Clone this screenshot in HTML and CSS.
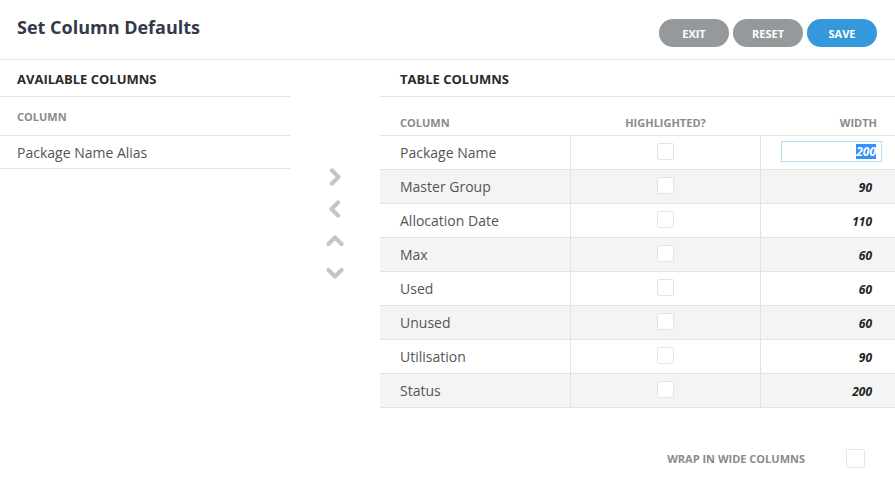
FILE: index.html
```html
<!DOCTYPE html>
<html lang="en">
<head>
  <meta charset="UTF-8">
  <title>Set Column Defaults</title>
  <link rel="stylesheet" href="styles.css">
</head>
<body>
  <div class="header">
    <h1>Set Column Defaults</h1>
    <div class="actions">
      <button class="btn grey">EXIT</button>
      <button class="btn grey">RESET</button>
      <button class="btn blue">SAVE</button>
    </div>
  </div>

  <div class="content">
    <div class="available">
      <div class="section-title">AVAILABLE COLUMNS</div>
      <div class="avail-head">COLUMN</div>
      <div class="avail-row">Package Name Alias</div>
    </div>

    <div class="moves">
      <svg width="18" height="18" viewBox="0 0 18 18"><polyline points="6,2.5 12.5,9 6,15.5" /></svg>
      <svg width="18" height="18" viewBox="0 0 18 18"><polyline points="12,2.5 5.5,9 12,15.5" /></svg>
      <svg width="18" height="18" viewBox="0 0 18 18"><polyline points="2.5,12 9,5.5 15.5,12" /></svg>
      <svg width="18" height="18" viewBox="0 0 18 18"><polyline points="2.5,6 9,12.5 15.5,6" /></svg>
    </div>

    <div class="table-cols">
      <div class="section-title indent">TABLE COLUMNS</div>
      <div class="grid head">
        <div class="c1">COLUMN</div>
        <div class="c2">HIGHLIGHTED?</div>
        <div class="c3">WIDTH</div>
      </div>
      <div class="grid row">
        <div class="c1">Package Name</div>
        <div class="c2"><span class="check"></span></div>
        <div class="c3"><span class="width-input"><span class="sel">200</span></span></div>
      </div>
      <div class="grid row alt">
        <div class="c1">Master Group</div>
        <div class="c2"><span class="check"></span></div>
        <div class="c3 num">90</div>
      </div>
      <div class="grid row">
        <div class="c1">Allocation Date</div>
        <div class="c2"><span class="check"></span></div>
        <div class="c3 num">110</div>
      </div>
      <div class="grid row alt">
        <div class="c1">Max</div>
        <div class="c2"><span class="check"></span></div>
        <div class="c3 num">60</div>
      </div>
      <div class="grid row">
        <div class="c1">Used</div>
        <div class="c2"><span class="check"></span></div>
        <div class="c3 num">60</div>
      </div>
      <div class="grid row alt">
        <div class="c1">Unused</div>
        <div class="c2"><span class="check"></span></div>
        <div class="c3 num">60</div>
      </div>
      <div class="grid row">
        <div class="c1">Utilisation</div>
        <div class="c2"><span class="check"></span></div>
        <div class="c3 num">90</div>
      </div>
      <div class="grid row alt">
        <div class="c1">Status</div>
        <div class="c2"><span class="check"></span></div>
        <div class="c3 num">200</div>
      </div>

      <div class="wrap-opt">
        <span>WRAP IN WIDE COLUMNS</span>
        <span class="check"></span>
      </div>
    </div>
  </div>
</body>
</html>
```

FILE: styles.css
```css
body {
  margin: 0;
  font-family: "Open Sans", "Noto Sans", sans-serif;
  color: #333;
  background: #fff;
}

.header {
  display: flex;
  justify-content: space-between;
  align-items: flex-start;
  height: 59px;
  padding: 0 18px 0 17px;
  border-bottom: 1px solid #e2e2ea;
}

h1 {
  margin: 0;
  padding-top: 15px;
  font-size: 18px;
  font-weight: 700;
  color: #323a4c;
}

.actions {
  display: flex;
  gap: 4px;
  padding-top: 19px;
}

.btn {
  width: 70px;
  height: 28px;
  border: none;
  border-radius: 14px;
  color: #fff;
  font-family: inherit;
  font-size: 11px;
  font-weight: 700;
  padding: 0;
}

.btn.grey {
  background: #96999c;
}

.btn.blue {
  background: #3498db;
}

.content {
  display: flex;
}

.available {
  width: 290px;
}

.section-title {
  height: 36px;
  line-height: 38px;
  padding-left: 17px;
  font-size: 13px;
  font-weight: 700;
  color: #2a2a2a;
  border-bottom: 1px solid #e2e2e2;
}

.section-title.indent {
  padding-left: 20px;
}

.avail-head {
  height: 38px;
  line-height: 40px;
  padding-left: 17px;
  font-size: 11px;
  font-weight: 700;
  color: #8a8a8a;
  border-bottom: 1px solid #e2e2e2;
}

.avail-row {
  height: 32px;
  line-height: 34px;
  padding-left: 17px;
  font-size: 14px;
  color: #555;
  border-bottom: 1px solid #e2e2e2;
}

.moves {
  width: 90px;
  display: flex;
  flex-direction: column;
  align-items: center;
  gap: 14px;
  padding-top: 108px;
}

.moves svg {
  fill: none;
  stroke: #c3c6c9;
  stroke-width: 4.2;
  stroke-linecap: round;
  stroke-linejoin: round;
}

.table-cols {
  flex: 1;
}

.grid {
  display: grid;
  grid-template-columns: 190px 191px 1fr;
  border-bottom: 1px solid #e2e2e2;
}

.grid.head {
  height: 38px;
  font-size: 11px;
  font-weight: 700;
  color: #8a8a8a;
}

.grid.head > div {
  padding-top: 18px;
}

.grid.head .c2 {
  border: none;
  text-align: center;
}

.grid.row {
  height: 33px;
  font-size: 14px;
  color: #555;
}

.grid.row > div {
  display: flex;
  align-items: center;
}

.grid.alt {
  background: #f4f4f4;
}

.c1 {
  padding-left: 20px;
}

.row .c2 {
  justify-content: center;
  border-left: 1px solid #e2e2e2;
  border-right: 1px solid #e2e2e2;
  padding-bottom: 2px;
}

.c3 {
  justify-content: flex-end;
  text-align: right;
  padding-right: 18px;
}

.num {
  font-size: 12px;
  font-weight: 700;
  font-style: italic;
  color: #222;
  padding-top: 2px;
  padding-right: 23px;
}

.check {
  display: inline-block;
  width: 17px;
  height: 17px;
  background: #fff;
  border: 1px solid #e4e4e4;
  border-radius: 2px;
  box-sizing: border-box;
}

.width-input {
  width: 101px;
  height: 21px;
  margin-right: -5px;
  box-sizing: border-box;
  border: 1px solid #b9dcf3;
  background: #fff;
  display: flex;
  align-items: center;
  justify-content: flex-end;
  padding-right: 5px;
  margin-bottom: 2px;
}

.sel {
  background: #3390ff;
  color: #fff;
  font-size: 12px;
  font-weight: 700;
  font-style: italic;
  line-height: 15px;
}

.wrap-opt {
  display: flex;
  justify-content: flex-end;
  align-items: center;
  gap: 41px;
  margin-top: 41px;
  padding-right: 30px;
  font-size: 11px;
  font-weight: 700;
  color: #8a8a8a;
}

.wrap-opt .check {
  width: 19px;
  height: 19px;
}
```
